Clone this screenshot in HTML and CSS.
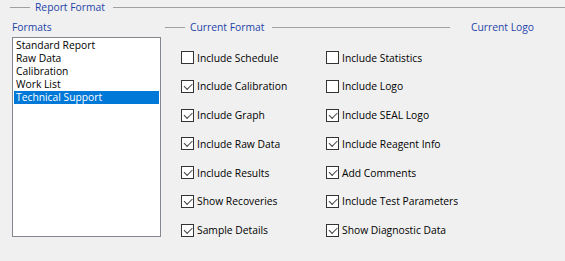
FILE: index.html
```html
<!DOCTYPE html>
<html lang="en">
<head>
  <meta charset="UTF-8">
  <title>Report Format</title>
  <link rel="stylesheet" href="styles.css">
</head>
<body>

  <!-- Report Format group -->
  <div class="legend top-legend">
    <span class="rule lead"></span>
    <span class="legend-text">Report Format</span>
    <span class="rule fill"></span>
  </div>

  <div class="panes">
    <!-- Formats list -->
    <div class="formats">
      <div class="pane-title">Formats</div>
      <ul class="listbox">
        <li>Standard Report</li>
        <li>Raw Data</li>
        <li>Calibration</li>
        <li>Work List</li>
        <li class="selected">Technical Support</li>
      </ul>
    </div>

    <!-- Current format options -->
    <div class="current">
      <div class="legend">
        <span class="rule lead"></span>
        <span class="legend-text">Current Format</span>
        <span class="rule fill"></span>
      </div>
      <div class="options">
        <div class="option-col">
          <label class="option"><span class="box"></span>Include Schedule</label>
          <label class="option"><span class="box checked"></span>Include Calibration</label>
          <label class="option"><span class="box checked"></span>Include Graph</label>
          <label class="option"><span class="box checked"></span>Include Raw Data</label>
          <label class="option"><span class="box checked"></span>Include Results</label>
          <label class="option"><span class="box checked"></span>Show Recoveries</label>
          <label class="option"><span class="box checked"></span>Sample Details</label>
        </div>
        <div class="option-col col-right">
          <label class="option"><span class="box"></span>Include Statistics</label>
          <label class="option"><span class="box"></span>Include Logo</label>
          <label class="option"><span class="box checked"></span>Include SEAL Logo</label>
          <label class="option"><span class="box checked"></span>Include Reagent Info</label>
          <label class="option"><span class="box checked"></span>Add Comments</label>
          <label class="option"><span class="box checked"></span>Include Test Parameters</label>
          <label class="option"><span class="box checked"></span>Show Diagnostic Data</label>
        </div>
      </div>
    </div>

    <!-- Current logo -->
    <div class="logo">
      <div class="pane-title">Current Logo</div>
    </div>
  </div>

</body>
</html>
```

FILE: styles.css
```css
/* Global */
* {
  margin: 0;
  padding: 0;
  box-sizing: border-box;
}

body {
  font-family: 'Open Sans', 'Liberation Sans', sans-serif;
  font-size: 10.3px;
  background: #f0f0f0;
  color: #000;
  width: 565px;
  height: 261px;
  overflow: hidden;
}

/* Group headers */
.legend {
  display: flex;
  align-items: center;
  height: 14px;
}

.rule {
  height: 1px;
  background: #a0a0a0;
}

.rule.lead {
  width: 20px;
}

.rule.fill {
  flex: 1;
}

.legend-text,
.pane-title {
  color: #1e44a8;
  line-height: 14px;
  white-space: nowrap;
}

.legend-text {
  padding: 0 8px 0 5px;
}

.top-legend {
  margin-left: 10px;
}

/* Main panes */
.panes {
  display: flex;
  margin-top: 6px;
}

.formats {
  margin-left: 12px;
  width: 149px;
  flex: none;
}

.pane-title {
  height: 17px;
}

.listbox {
  list-style: none;
  background: #fff;
  border: 1px solid #828790;
  height: 200px;
  padding: 1px 1px 0;
}

.listbox li {
  height: 13px;
  line-height: 13px;
  padding-left: 2px;
}

.listbox li.selected {
  background: #0078d7;
  color: #fff;
}

/* Current format */
.current {
  margin-left: 4px;
  width: 285px;
  flex: none;
}

.options {
  display: flex;
  padding: 17px 0 0 16px;
}

.option-col {
  display: flex;
  flex-direction: column;
  gap: 15.8px;
  width: 145px;
  flex: none;
}

.option {
  display: flex;
  align-items: center;
  height: 13px;
  white-space: nowrap;
}

.box {
  position: relative;
  width: 13px;
  height: 13px;
  flex: none;
  border: 1px solid #333;
  background: #fff;
  margin-right: 3px;
}

.box.checked::after {
  content: '';
  position: absolute;
  left: 2px;
  top: 2px;
  width: 7px;
  height: 3.5px;
  border-left: 1px solid #444;
  border-bottom: 1px solid #444;
  transform: rotate(-45deg);
}

/* Current logo */
.logo {
  margin-left: 21px;
}
```
